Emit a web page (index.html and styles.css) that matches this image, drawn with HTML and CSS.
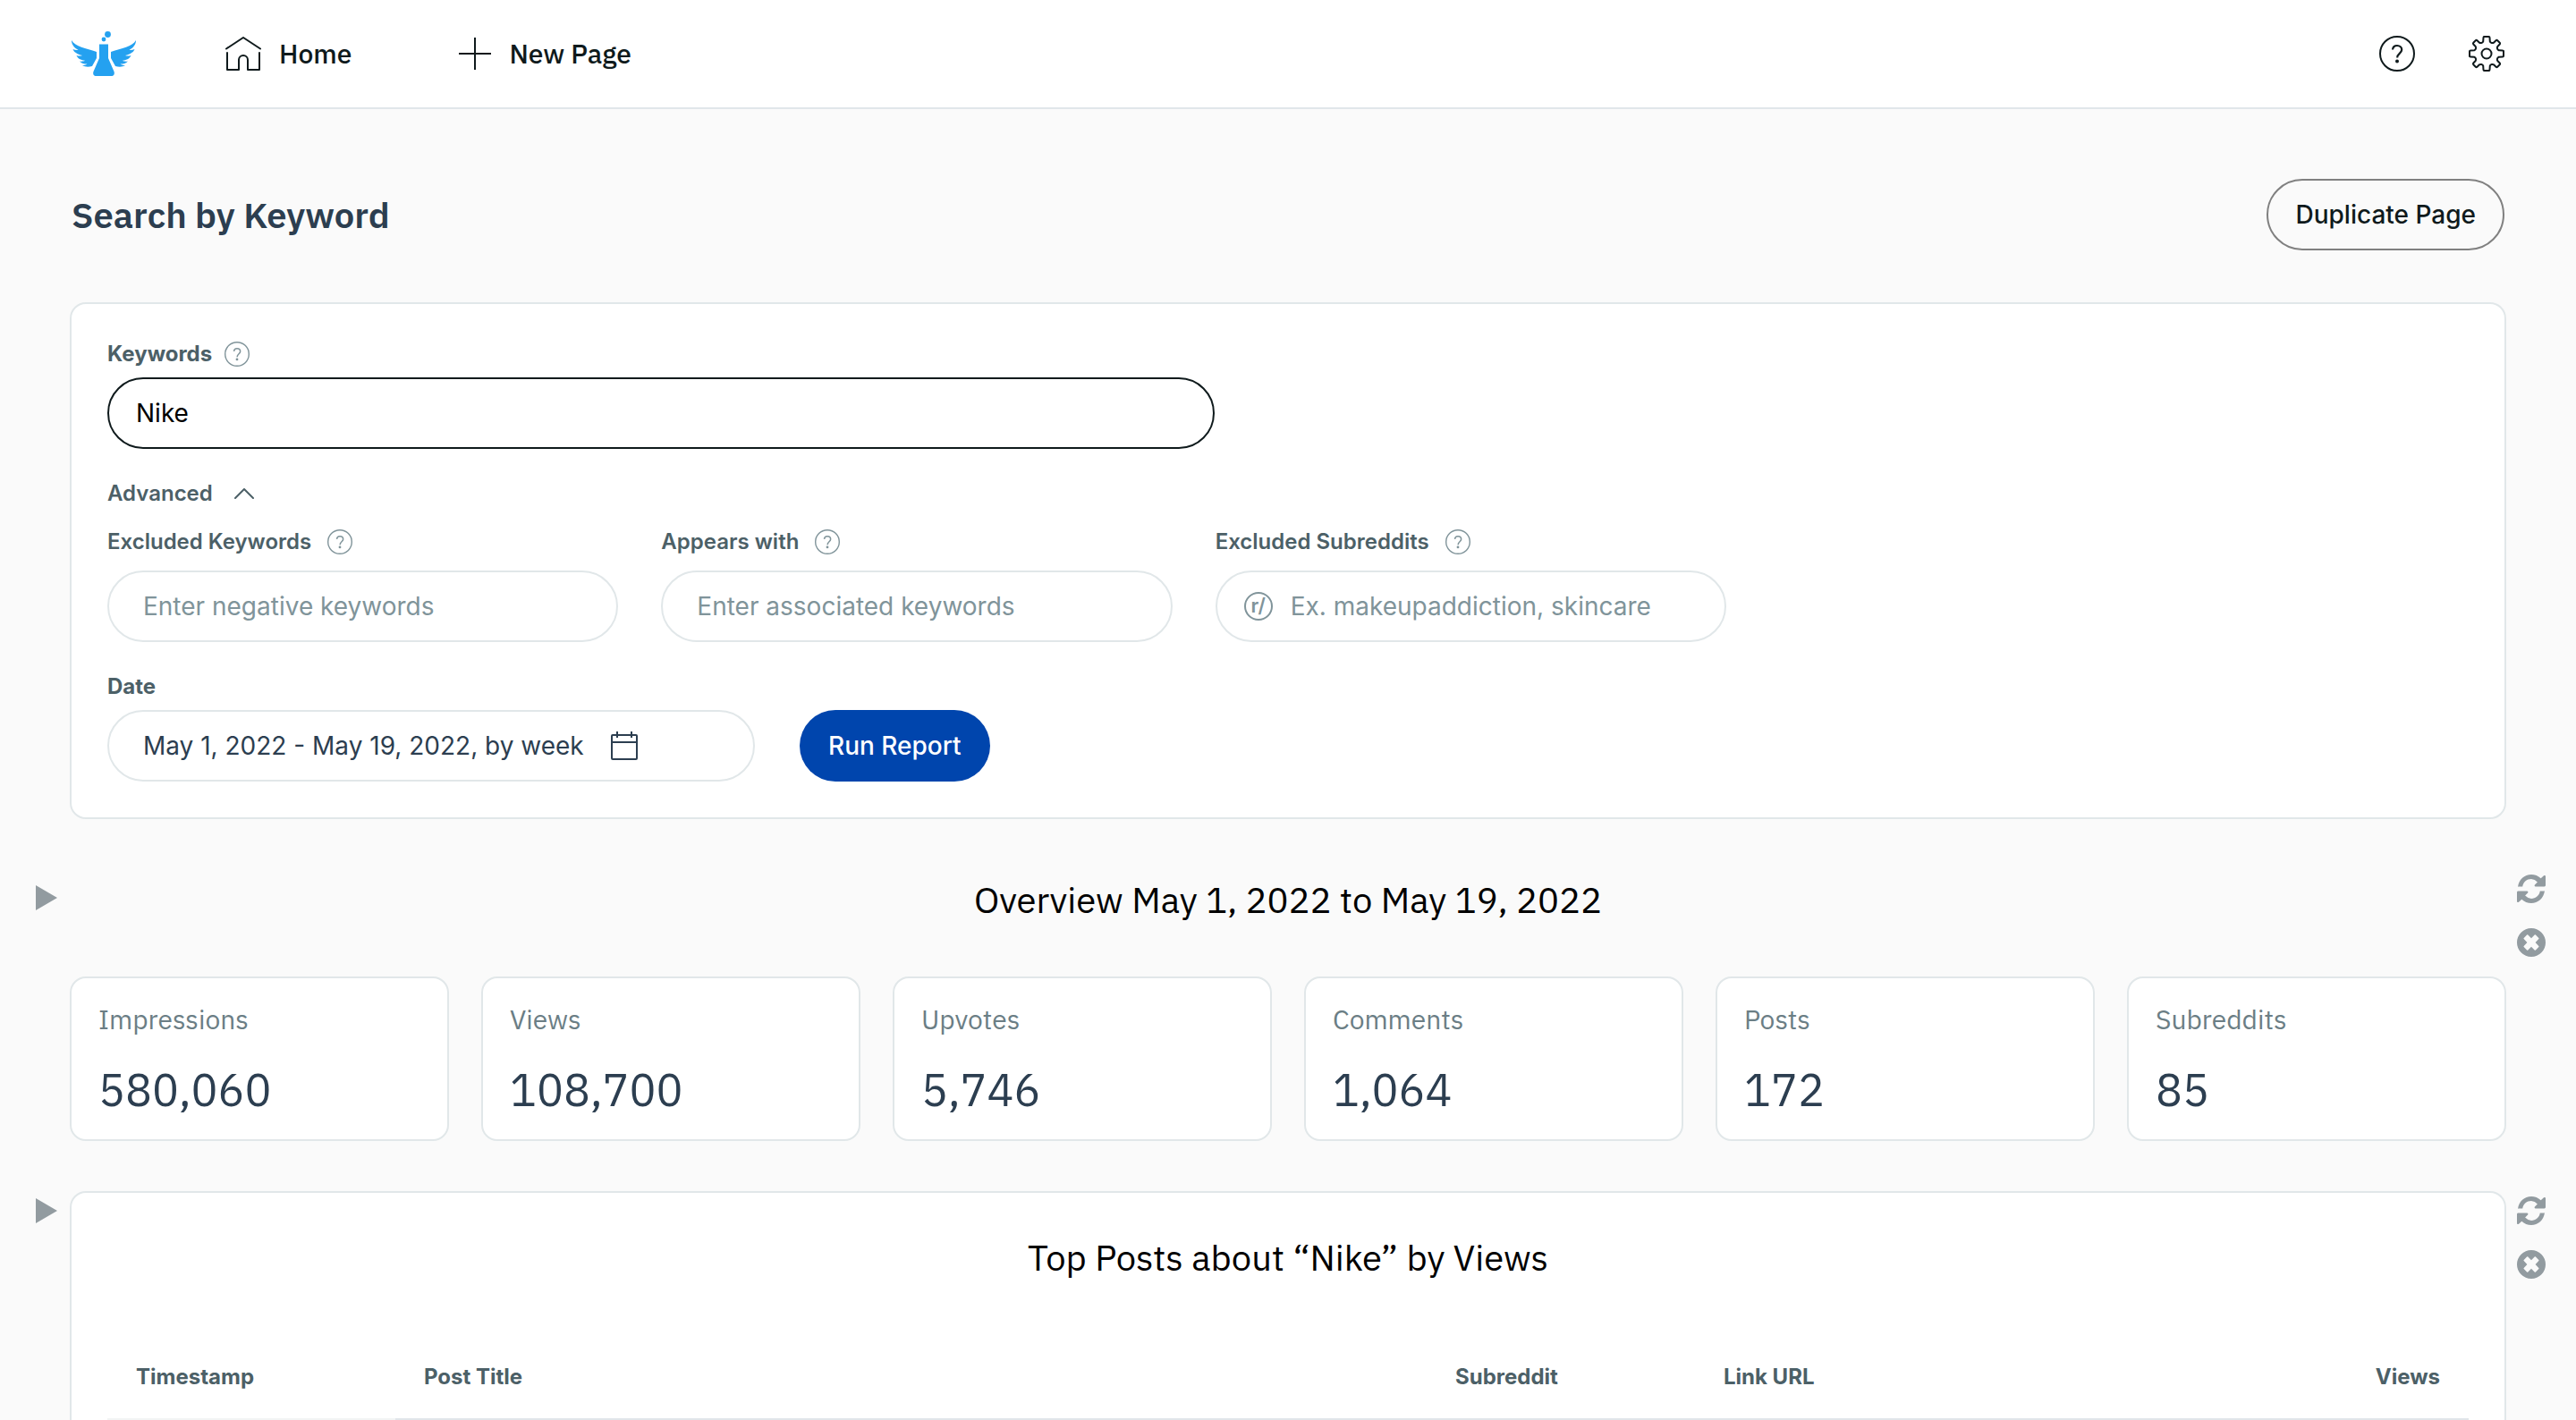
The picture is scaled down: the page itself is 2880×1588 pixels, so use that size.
FILE: index.html
```
<!DOCTYPE html>
<html lang="en">
<head>
<meta charset="utf-8">
<title>Search by Keyword</title>
<link rel="stylesheet" href="styles.css">
</head>
<body>
<svg class="sprite" aria-hidden="true">
  <symbol id="i-help" viewBox="0 0 40 40"><circle cx="20" cy="20" r="19" fill="none" stroke="currentColor" stroke-width="2"/><path d="M15 15.500c.3-3 2.300-4.500 5-4.500 3 0 5.200 1.800 5.200 4.600 0 4.200-5 4-5 9" fill="none" stroke="currentColor" stroke-width="2.200"/><circle cx="20" cy="28.500" r="2" fill="currentColor"/></symbol>
  <symbol id="i-refresh" viewBox="0 0 32 32"><path d="M1 14C2 5.500 8.500 0 16 0c4 0 7.800 1.500 10.700 4.300L30 1.300c.8-.7 2-.2 2 .8V12c0 .8-.6 1.400-1.400 1.400h-9.900c-1 0-1.500-1.200-.8-2l3-3A11 11 0 0 0 16 5C11 5 7 8.500 6.200 13.400H1.500z" fill="currentColor"/><path d="M31 18c-1 8.500-7.500 14-15 14-4 0-7.800-1.500-10.700-4.300L2 30.700c-.8.700-2 .2-2-.8V20c0-.8.600-1.400 1.400-1.400h9.900c1 0 1.500 1.200.8 2l-3 3A11 11 0 0 0 16 27c5 0 9-3.500 9.800-8.400h4.700z" fill="currentColor"/></symbol>
  <symbol id="i-close" viewBox="0 0 32 32"><path fill="currentColor" fill-rule="evenodd" d="M16 0a16 16 0 1 1 0 32 16 16 0 0 1 0-32zm0 11.300l-3.700-3.800c-.4-.4-.8-.4-1.200 0l-3.400 3.400c-.4.4-.4.800 0 1.200L11.400 16l-3.700 3.900c-.4.400-.4.800 0 1.200l3.400 3.400c.4.400.8.400 1.200 0l3.700-3.800 3.700 3.800c.4.400.8.400 1.200 0l3.400-3.400c.4-.4.4-.8 0-1.200L20.600 16l3.700-3.900c.4-.4.4-.8 0-1.200l-3.400-3.400c-.4-.4-.8-.4-1.200 0z"/></symbol>
  <symbol id="i-play" viewBox="0 0 24 28"><path d="M0 0l24 14L0 28z" fill="currentColor"/></symbol>
</svg>

<header class="topbar">
  <nav class="nav">
    <a class="logo" href="#" aria-label="Dashboard">
      <svg viewBox="0 0 72 50" width="72" height="50"><g fill="#24a1f0"><circle cx="40.500" cy="3.500" r="3.400"/><circle cx="36" cy="9" r="2.400"/><path d="M31 14.500h10v15.500l6.500 15c1 3-.5 5-3 5h-17c-2.500 0-4-2-3-5L31 30z"/><path id="wing" d="M0 10c4 7 16 9 28 13v7l-5 9c-4 1-8 1-11-1 2 0 4-.5 5.500-1.500-3.500 0-6.500-.5-8.500-3 2 .4 4.500.3 6-.7C10 32 7 30.500 5.500 27c2 .7 4.500.8 6.500 0C6 25.500 2.500 23 1.500 20c2 1 4 1.300 6 1C2.500 18 0 14.500 0 10z"/><use href="#wing" transform="matrix(-1 0 0 1 72 0)"/></g></svg>
    </a>
    <a class="nav-link" href="#"><svg viewBox="0 0 40 38" width="40" height="38" fill="none" stroke="currentColor" stroke-width="2" stroke-linejoin="round" stroke-linecap="round"><path d="M1 13.500L20 1l19 12.500M2 18v19h13V26a5 5 0 0 1 10 0v11h13V18"/></svg>Home</a>
    <a class="nav-link" href="#"><svg viewBox="0 0 36 36" width="36" height="36" stroke="currentColor" stroke-width="2"><path d="M18 0v36M0 18h36"/></svg>New Page</a>
  </nav>
  <div class="tools">
    <button class="icon-btn" type="button" aria-label="Help"><svg width="40" height="40"><use href="#i-help"/></svg></button>
    <button class="icon-btn" type="button" aria-label="Settings"><svg viewBox="0 0 40 40" width="40" height="40" fill="none" stroke="currentColor" stroke-width="2" stroke-linejoin="round" stroke-linecap="round"><circle cx="20" cy="20" r="5.500"/><path id="teeth" d="M17.500 1h5c.8 0 1 .4 1 1l.3 4.500c.9 1.600 3 2 4.200 1.200l2.500-2.400c.6-.5 1.200-.5 1.700 0l2.500 2.500c.5.5.5 1.100 0 1.700l-2.400 2.500c-.8 1.200-.4 3.300 1.200 4.200l4.500.3c.6 0 1 .2 1 1"/><use href="#teeth" transform="rotate(90 20 20)"/><use href="#teeth" transform="rotate(180 20 20)"/><use href="#teeth" transform="rotate(270 20 20)"/></svg></button>
  </div>
</header>

<main class="page">
  <div class="page-head">
    <h1 class="page-title">Search by Keyword</h1>
    <button class="btn btn-outline" type="button">Duplicate Page</button>
  </div>

  <form class="card search">
    <div class="field field-wide">
      <div class="label-row strong"><label for="kw">Keywords</label><svg class="hint" width="28" height="28"><use href="#i-help"/></svg></div>
      <input class="input input-active" id="kw" type="text" value="Nike">
    </div>
    <button class="advanced" type="button">Advanced<svg viewBox="0 0 22 12" width="22" height="12" fill="none" stroke="currentColor" stroke-width="2" stroke-linecap="round" stroke-linejoin="round"><path d="M1 11L11 1l10 10"/></svg></button>
    <div class="advanced-grid">
      <div class="field">
        <div class="label-row spaced"><label for="neg">Excluded Keywords</label><svg class="hint" width="28" height="28"><use href="#i-help"/></svg></div>
        <input class="input" id="neg" type="text" placeholder="Enter negative keywords">
      </div>
      <div class="field">
        <div class="label-row spaced"><label for="assoc">Appears with</label><svg class="hint" width="28" height="28"><use href="#i-help"/></svg></div>
        <input class="input" id="assoc" type="text" placeholder="Enter associated keywords">
      </div>
      <div class="field">
        <div class="label-row spaced"><label for="subs">Excluded Subreddits</label><svg class="hint" width="28" height="28"><use href="#i-help"/></svg></div>
        <div class="input input-group">
          <span class="sub-badge">r/</span>
          <input class="bare" id="subs" type="text" placeholder="Ex. makeupaddiction, skincare">
        </div>
      </div>
    </div>
    <div class="date-row">
      <div class="field date-field">
        <div class="label-row strong"><label for="date">Date</label></div>
        <button class="input date" id="date" type="button">May 1, 2022 - May 19, 2022, by week<svg viewBox="0 0 30 32" width="30" height="32" fill="none" stroke="currentColor" stroke-width="2"><rect x="1" y="4" width="28" height="27" rx="1"/><path d="M1 12h28M7 0v7M23 0v7"/></svg></button>
      </div>
      <button class="btn btn-primary" type="button">Run Report</button>
    </div>
  </form>

  <section class="block overview">
    <button class="icon-btn muted play" type="button" aria-label="Expand overview"><svg width="24" height="28"><use href="#i-play"/></svg></button>
    <div class="side">
      <button class="icon-btn muted" type="button" aria-label="Refresh overview"><svg width="32" height="32"><use href="#i-refresh"/></svg></button>
      <button class="icon-btn muted" type="button" aria-label="Remove overview"><svg width="32" height="32"><use href="#i-close"/></svg></button>
    </div>
    <h2 class="block-title">Overview May 1, 2022 to May 19, 2022</h2>
    <dl class="stats">
      <div class="card stat"><dt>Impressions</dt><dd>580,060</dd></div>
      <div class="card stat"><dt>Views</dt><dd>108,700</dd></div>
      <div class="card stat"><dt>Upvotes</dt><dd>5,746</dd></div>
      <div class="card stat"><dt>Comments</dt><dd>1,064</dd></div>
      <div class="card stat"><dt>Posts</dt><dd>172</dd></div>
      <div class="card stat"><dt>Subreddits</dt><dd>85</dd></div>
    </dl>
  </section>

  <section class="block posts">
    <button class="icon-btn muted play" type="button" aria-label="Expand top posts"><svg width="24" height="28"><use href="#i-play"/></svg></button>
    <div class="side">
      <button class="icon-btn muted" type="button" aria-label="Refresh top posts"><svg width="32" height="32"><use href="#i-refresh"/></svg></button>
      <button class="icon-btn muted" type="button" aria-label="Remove top posts"><svg width="32" height="32"><use href="#i-close"/></svg></button>
    </div>
    <div class="card posts-card">
      <h2 class="block-title">Top Posts about “Nike” by Views</h2>
      <table class="table">
        <colgroup><col class="c-time"><col><col class="c-sub"><col class="c-link"><col class="c-views"></colgroup>
        <thead><tr><th class="sorted">Timestamp</th><th>Post Title</th><th>Subreddit</th><th>Link URL</th><th class="num">Views</th></tr></thead>
      </table>
    </div>
  </section>
</main>
</body>
</html>
```
FILE: styles.css
```
* { box-sizing: border-box; }
body {
  display: flex;
  flex-direction: column;
  min-height: 100vh;
  margin: 0;
  background: #fafafa;
  color: #0f1a1c;
  font-family: Inter, "Liberation Sans", sans-serif;
  font-size: 28px;
  line-height: 36px;
}
button, input { font: inherit; color: inherit; }
svg { display: block; flex: none; }
.sprite { position: absolute; width: 0; height: 0; }
h1, h2, dl, dd { margin: 0; }

.topbar {
  display: flex;
  justify-content: space-between;
  align-items: center;
  height: 122px;
  padding: 0 80px;
  background: #fff;
  border-bottom: 2px solid #e1e6ea;
}
.nav, .tools { display: flex; align-items: center; }
.tools { gap: 60px; }
.logo { margin-right: 100px; }
.nav-link {
  display: flex;
  align-items: center;
  gap: 20px;
  margin-right: 120px;
  color: inherit;
  font: 500 30px/40px "IBM Plex Sans", "Noto Sans", sans-serif;
  text-decoration: none;
}
.icon-btn { padding: 0; border: 0; background: none; }
.muted { color: #929ba0; }

.page {
  display: flex;
  flex: 1;
  flex-direction: column;
  padding: 78px 78px 0;
}
.page-head {
  display: flex;
  justify-content: space-between;
  align-items: center;
  padding: 0 2px;
}
.page-title {
  color: #2c3e50;
  font: 600 40px/52px "IBM Plex Sans", "Noto Sans", sans-serif;
}
.btn {
  height: 80px;
  padding: 0 30px;
  border: 2px solid transparent;
  border-radius: 40px;
  font-weight: 500;
}
.btn-outline { background: transparent; border-color: #808080; }
.btn-primary { background: #0045ad; color: #fff; }

.card {
  background: #fff;
  border: 2px solid #e1e7e9;
  border-radius: 18px;
}
.search { margin-top: 58px; padding: 40px; }
.label-row, .advanced {
  display: flex;
  align-items: center;
  color: #4c6067;
  font-size: 24px;
  font-weight: 600;
  line-height: 32px;
}
.label-row { gap: 14px; margin-bottom: 10px; }
.label-row.strong { font-weight: 700; }
.label-row.spaced { gap: 18px; margin-bottom: 16px; }
.hint { color: #80949a; }
.field-wide { max-width: 1238px; }
.input {
  display: block;
  width: 100%;
  height: 80px;
  padding: 0 38px;
  border: 2px solid #e1e7e9;
  border-radius: 40px;
  background: #fff;
  outline: 0;
}
.input-active { padding: 0 30px; border-color: #0f1a1c; color: #000; }
::placeholder { color: #80949a; opacity: 1; }
.advanced {
  gap: 24px;
  margin: 34px 0 22px;
  padding: 0;
  border: 0;
  background: none;
}
.advanced-grid {
  display: grid;
  grid-template-columns: repeat(3, 1fr);
  gap: 48px;
  max-width: 1810px;
}
.input-group { display: flex; align-items: center; gap: 20px; padding: 0 30px; }
.sub-badge {
  flex: none;
  width: 32px;
  height: 32px;
  border: 2px solid #80949a;
  border-radius: 50%;
  color: #80949a;
  font-size: 22px;
  font-weight: 600;
  line-height: 26px;
  text-align: center;
}
.bare { flex: 1; min-width: 0; padding: 0; border: 0; outline: 0; background: none; }
.date-row { display: flex; align-items: flex-end; gap: 50px; margin-top: 34px; }
.date-field { width: 724px; }
.date { display: flex; align-items: center; gap: 30px; color: #2c3e50; }

.block { position: relative; }
.play { position: absolute; left: -38px; }
.side {
  position: absolute;
  right: -44px;
  display: grid;
  gap: 28px;
}
.block-title {
  color: #000;
  font: 400 40px/52px "IBM Plex Sans", "Noto Sans", sans-serif;
  text-align: center;
}
.overview { padding-top: 64px; }
.overview .play { top: 74px; }
.overview .side { top: 62px; }
.stats {
  display: grid;
  grid-template-columns: repeat(6, 1fr);
  gap: 36px;
  margin-top: 60px;
}
.stat {
  padding: 26px 30px 22px;
  font-family: "IBM Plex Sans", "Noto Sans", sans-serif;
}
.stat dt { color: #6b7e85; font-size: 30px; line-height: 40px; }
.stat dd { margin-top: 26px; color: #2c3e50; font-size: 50px; line-height: 66px; }

.posts {
  display: flex;
  flex: 1;
  flex-direction: column;
  margin-top: 56px;
}
.posts .play { top: 8px; }
.posts .side { top: 6px; }
.posts-card {
  flex: 1;
  padding: 46px 40px 0;
  border-bottom: 0;
  border-radius: 18px 18px 0 0;
}
.table {
  width: 100%;
  margin-top: 76px;
  border-spacing: 0;
  table-layout: fixed;
}
.c-time { width: 322px; }
.c-sub { width: 300px; }
.c-link { width: 500px; }
.c-views { width: 365px; }
.table th {
  height: 80px;
  padding: 0 32px 14px;
  border-bottom: 2px solid #e1e6ea;
  color: #4c6067;
  font-size: 24px;
  font-weight: 700;
  text-align: left;
}
.table th.sorted { border-bottom-color: #f2f4f4; }
.table th.num { text-align: right; }
```
